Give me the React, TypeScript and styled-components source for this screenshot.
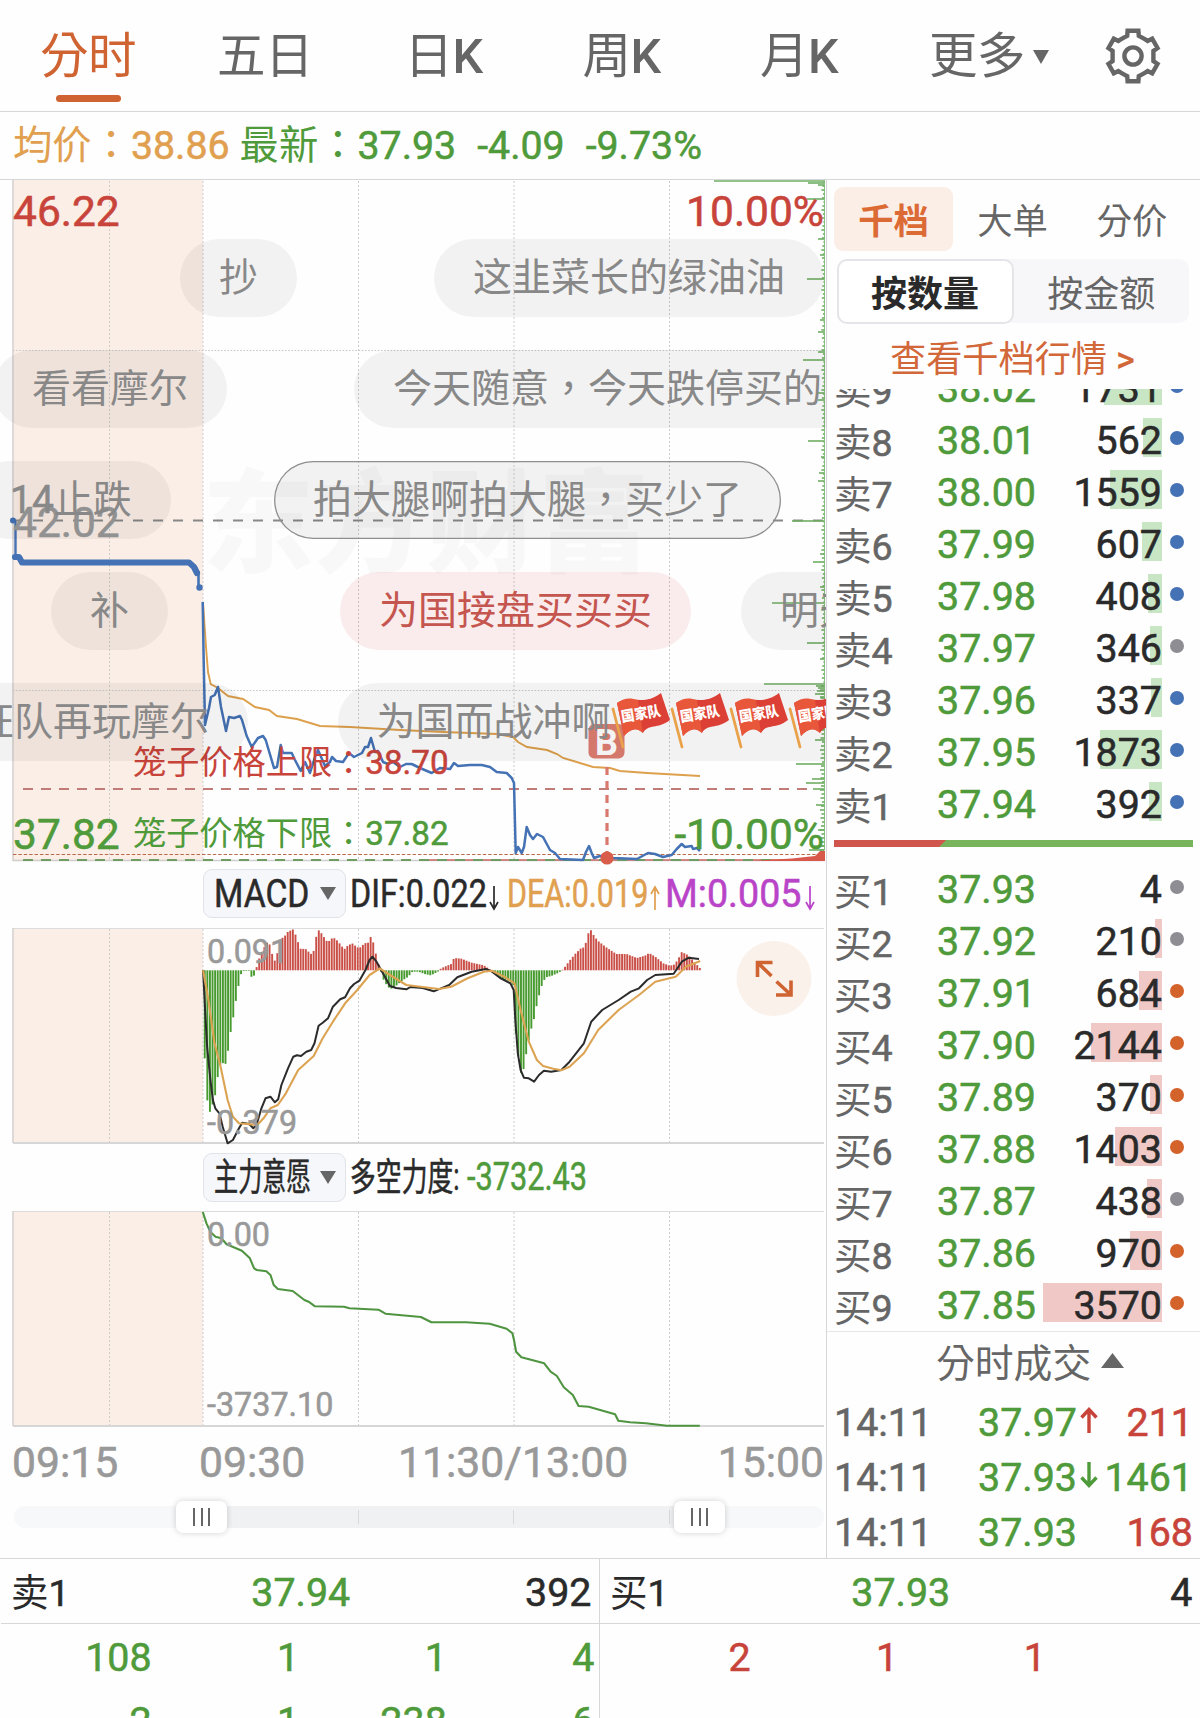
import React from "react";
import styled, { createGlobalStyle, css } from "styled-components";

const C = {
  text: "#2a2a2a",
  mute: "#666666",
  axis: "#999999",
  green: "#4f9a3a",
  red: "#c8443b",
  orange: "#cf6432",
  gold: "#e0a050",
  blue: "#4472b4",
  line: "#d6d7d9",
  blush: "#fbeee6",
};

/* digits and Latin letters sit slightly above the Chinese text in weight */
const figures = css`
  -webkit-text-stroke: 0.55px currentColor;
`;

const Global = createGlobalStyle`
  * { box-sizing: border-box; }
  body { margin: 0; background: #fefefe; }
`;

const Page = styled.div`
  width: 1200px;
  height: 1718px;
  overflow: hidden;
  background: #fefefe;
  color: ${C.text};
  font-family: Roboto, "Noto Sans CJK TC", sans-serif;
  font-size: 39.4px;
  white-space: nowrap;
`;

const Latin = styled.span`
  ${figures}
`;

const Strong = styled.span`
  font-weight: 500;
`;

/* ---------- top bars ---------- */

const TabBar = styled.nav`
  display: grid;
  grid-template-columns: 176px 178px 179px 177px 178px 202px 1fr;
  height: 112px;
  border-bottom: 1px solid ${C.line};
`;

const Tab = styled.div<{ $active?: boolean }>`
  display: flex;
  flex-direction: column;
  align-items: center;
  padding-top: 22px;
  font-size: 48.5px;
  line-height: 70px;
  letter-spacing: -0.5px;
  color: ${(p) => (p.$active ? C.orange : C.mute)};
  &::after {
    content: "";
    width: 65px;
    height: 7px;
    margin-top: 3px;
    border-radius: 4px;
    background: ${(p) => (p.$active ? C.orange : "transparent")};
  }
`;

const TabLabel = styled.span`
  display: flex;
  align-items: center;
  gap: 8px;
`;

const GearCell = styled.div`
  display: flex;
  align-items: center;
  padding-left: 14px;
`;

const InfoBar = styled.div`
  display: flex;
  height: 68px;
  padding-left: 13px;
  border-bottom: 1px solid ${C.line};
  font-size: 39.3px;
  line-height: 68px;
`;

const Info = styled.span<{ $color: string; $gap: number }>`
  color: ${(p) => p.$color};
  margin-right: ${(p) => p.$gap}px;
`;

/* ---------- chart column ---------- */

const Main = styled.main`
  display: flex;
  height: 1378px;
`;

const ChartColumn = styled.section`
  width: 827px;
  flex: none;
  border-right: 1px solid ${C.line};
`;

const PriceArea = styled.div`
  position: relative;
  height: 687px;
  overflow: hidden;
`;

const Drawing = styled.svg`
  display: block;
`;

const Figure = styled.text<{ $color: string; $size: number }>`
  font-size: ${(p) => p.$size}px;
  fill: ${(p) => p.$color};
  stroke: ${(p) => p.$color};
  stroke-width: 0.55px;
`;

const CageLabel = styled.text<{ $color: string }>`
  font-size: 33.2px;
  fill: ${(p) => p.$color};
  tspan {
    stroke: ${(p) => p.$color};
    stroke-width: 0.5px;
  }
`;

const Pill = styled.div<{ $x: number; $row: number; $tone?: "rose" | "mine" }>`
  position: absolute;
  left: ${(p) => p.$x}px;
  top: ${(p) => 59 + p.$row * 111.1}px;
  display: flex;
  align-items: center;
  height: 78px;
  padding: 0 39px;
  border-radius: 39px;
  font-size: 39px;
  line-height: 78px;
  color: ${(p) => (p.$tone === "rose" ? "#c4564f" : "#888888")};
  background: ${(p) => (p.$tone === "rose" ? "rgba(215,60,60,0.09)" : "rgba(0,0,0,0.047)")};
  box-shadow: ${(p) => (p.$tone === "mine" ? "inset 0 0 0 1.3px #8f8f8f" : "none")};
`;

const IndicatorBar = styled.div<{ $h: number }>`
  display: flex;
  align-items: center;
  height: ${(p) => p.$h}px;
  padding-left: 203px;
  font-size: 38px;
  line-height: 48px;
`;

const Select = styled.div`
  display: flex;
  align-items: center;
  width: 143px;
  height: 49px;
  padding-left: 10px;
  margin-right: 4px;
  border: 1px solid #e0e3e8;
  border-radius: 9px;
  background: #f6f7fa;
`;

const Squeeze = styled.span<{ $w: number; $s: number; $color?: string }>`
  flex: none;
  width: ${(p) => p.$w}px;
  transform: scaleX(${(p) => p.$s});
  transform-origin: left center;
  color: ${(p) => p.$color ?? C.text};
  ${figures}
`;

const TimeAxis = styled.div`
  display: grid;
  grid-template-columns: 187px 199px 1fr auto;
  height: 56px;
  padding: 0 2px 0 12px;
  font-size: 42.7px;
  line-height: 56px;
  color: ${C.axis};
  ${figures}
`;

const SliderRow = styled.div`
  display: flex;
  align-items: center;
  height: 54px;
  padding: 0 2px 0 14px;
`;

const Track = styled.div`
  position: relative;
  display: flex;
  flex: 1;
  height: 22px;
  padding: 0 124px 0 189px;
  border-radius: 11px;
  background: #f7f8fa;
`;

const Range = styled.div`
  display: flex;
  flex: 1;
  align-items: center;
  background: #f0f1f3;
`;

const Notch = styled.i<{ $w: number }>`
  width: ${(p) => p.$w}px;
  height: 14px;
  border-right: 1px solid #d9dadc;
`;

const Thumb = styled.div<{ $x: number }>`
  position: absolute;
  left: ${(p) => p.$x}px;
  top: -5px;
  display: flex;
  justify-content: center;
  align-items: center;
  gap: 5.6px;
  width: 51px;
  height: 32px;
  border-radius: 7px;
  background: #fff;
  box-shadow: 0 0 6px rgba(0, 0, 0, 0.18);
  i {
    width: 2px;
    height: 18px;
    background: #666;
  }
`;

/* ---------- order book ---------- */

const Side = styled.aside`
  flex: 1;
  padding-top: 7px;
`;

const ModeTabs = styled.div`
  display: grid;
  grid-template-columns: 119px 119px 120px;
  grid-template-rows: 64px;
  height: 64px;
  margin-left: 7px;
`;

const Mode = styled.div<{ $active?: boolean }>`
  height: 64px;
  border-radius: 9px;
  text-align: center;
  font-size: 35.3px;
  line-height: 70px;
  font-weight: ${(p) => (p.$active ? 700 : 400)};
  color: ${(p) => (p.$active ? "#dc6a35" : C.mute)};
  background: ${(p) => (p.$active ? C.blush : "transparent")};
`;

const Segments = styled.div`
  display: grid;
  grid-template-columns: 177px 1fr;
  grid-template-rows: 64px;
  height: 64px;
  margin: 8px 11px 0 9.5px;
  border-radius: 10px;
  background: #f7f7fa;
`;

const Segment = styled.div<{ $active?: boolean }>`
  height: 65px;
  border-radius: 10px;
  border: 2px solid ${(p) => (p.$active ? "#e4e5e9" : "transparent")};
  background: ${(p) => (p.$active ? "#fff" : "transparent")};
  text-align: center;
  font-size: 36px;
  line-height: 68px;
  font-weight: ${(p) => (p.$active ? 700 : 400)};
  color: ${(p) => (p.$active ? C.text : C.mute)};
`;

const MoreLink = styled.div`
  height: 66px;
  padding-left: 63px;
  font-size: 36.2px;
  line-height: 73px;
  color: #d2683a;
`;

const Asks = styled.div`
  display: flex;
  flex-direction: column;
  justify-content: flex-end;
  height: 445px;
  overflow: hidden;
`;

const Bids = styled.div`
  padding-top: 20px;
  height: 485px;
  border-bottom: 1px solid #e6e7e9;
`;

const Level = styled.div`
  display: grid;
  grid-template-columns: 103px 106px 119px 1fr;
  flex: none;
  height: 52px;
  padding-left: 7px;
  line-height: 45px;
`;

const LevelName = styled.span`
  font-size: 37.6px;
  line-height: 51px;
  color: ${C.mute};
`;

const Price = styled.span`
  color: ${C.green};
  ${figures}
`;

const Qty = styled.span<{ $tone: string }>`
  display: grid;
  justify-items: end;
  height: 39px;
  ${figures}
  & > * {
    grid-area: 1 / 1;
  }
  i {
    height: 39px;
    background: ${(p) => p.$tone};
  }
`;

const Dot = styled.b<{ $color: string }>`
  width: 14px;
  height: 14px;
  margin: 13px 0 0 8px;
  border-radius: 50%;
  background: ${(p) => p.$color};
`;

const Ratio = styled.div`
  height: 7px;
  margin: 6px 7px 0 7px;
  background: linear-gradient(135deg, #d0564d 0 79px, #78b45c 79.5px);
`;

const TradesTitle = styled.div`
  display: flex;
  align-items: center;
  gap: 10px;
  height: 63px;
  padding: 0 0 7px 109px;
  font-size: 38.8px;
  line-height: 56px;
  color: ${C.mute};
  span {
    padding-top: 7px;
  }
`;

const Trade = styled.div`
  display: grid;
  grid-template-columns: 144px 102px 18px 1fr;
  height: 55px;
  padding: 0 7px 0 7px;
  line-height: 56px;
  color: ${C.mute};
  ${figures}
`;

const TradeQty = styled.span<{ $color: string }>`
  justify-self: end;
  color: ${(p) => p.$color};
  ${figures}
`;

/* ---------- bottom queues ---------- */

const Queues = styled.footer`
  display: grid;
  grid-template-columns: 599px 601px;
  height: 160px;
  border-top: 1px solid ${C.line};
`;

const Queue = styled.div<{ $divided?: boolean }>`
  border-left: 1px solid ${(p) => (p.$divided ? C.line : "transparent")};
`;

const QueueHead = styled.div`
  display: grid;
  grid-template-columns: 1fr 100px 1fr;
  height: 65px;
  padding: 0 7.5px 0 10px;
  border-bottom: 1px solid ${C.line};
  line-height: 68px;
`;

const QueueName = styled.span`
  font-size: 37.5px;
`;

const QueueTotal = styled.span`
  justify-self: end;
  ${figures}
`;

const QueueRow = styled.div<{ $color: string }>`
  display: grid;
  grid-template-columns: repeat(4, 147.6px);
  padding-left: 3px;
  height: 64px;
  line-height: 68px;
  text-align: right;
  color: ${(p) => p.$color};
  ${figures}
`;

/* ---------- data ---------- */

type Pt = [number, number];

const priceLine: Pt[] = [
  [202.7, 602], [203.5, 650], [205, 725], [209, 708], [211, 697], [214.7, 695], [218, 687], [221, 707], [226, 731], [229, 717], [234, 718],
  [240, 716], [242, 720], [246.7, 736], [251.7, 747], [258, 738], [263, 736], [265.7, 740], [274, 768], [277, 767],
  [280.7, 745], [283, 753], [291.7, 753], [295, 760], [300.7, 771], [305, 762], [310, 773], [315, 757], [318, 750],
  [325, 766], [330, 762], [332, 757], [336, 761], [343, 762], [349, 753], [354, 757], [362, 753], [365, 747],
  [368, 747], [371, 738], [375, 752], [378, 751], [383, 762], [388, 764], [393, 762], [400, 767], [406, 764], [411.7, 764],
  [420, 768], [431.7, 773], [440, 768], [450, 769], [454, 763], [458, 766], [470, 765], [481.7, 765], [490, 767], [496.7, 772],
  [506.7, 773], [511.7, 778], [514, 783], [515.7, 853], [518, 847], [521.7, 853], [524, 847], [526.7, 827], [530, 835],
  [533, 839], [537, 834], [543, 837], [550, 850], [555, 853], [560, 859], [583, 860], [586, 852], [589, 846],
  [591.7, 853], [594, 858], [600, 856], [613, 858], [637, 859], [648, 853], [655, 854], [663, 857], [671.7, 855],
  [676.7, 849], [681.7, 844], [685, 847], [691.7, 846], [693, 849], [697, 848], [700, 851],
];

const averageLine: Pt[] = [
  [203, 602], [206, 647], [208, 672], [210.7, 684], [218, 688], [228, 696], [243, 699], [255, 707], [269, 710], [277, 716],
  [297, 719], [320, 726], [350, 727], [400, 730], [443, 732], [497, 734], [513, 737], [518, 742], [527, 747], [547, 750],
  [557, 754], [563, 758], [580, 763], [593, 767], [610, 768], [620, 771], [647, 773], [700, 776],
];

/* MACD series are kept in a 2.45 x 3 sample grid */
const grid = (pts: Pt[]): Pt[] => pts.map(([x, y]) => [190 + x / 2.45, 860 + y / 3]);

const difLine = grid([
  [32, 331], [37, 450], [42, 560], [50, 660], [56, 720], [62, 745], [72, 760], [80, 800], [92, 850], [105, 840], [120, 805],
  [128, 788], [145, 792], [155, 805], [163, 795], [175, 745], [185, 715], [197, 710], [208, 727], [216, 718], [224, 675],
  [240, 625], [253, 590], [262, 586], [272, 588], [285, 575], [297, 570], [305, 550], [315, 497], [325, 488], [338, 475],
  [350, 440], [368, 418], [380, 412], [392, 385], [402, 372], [415, 362], [430, 330], [440, 300], [447, 290], [457, 305],
  [475, 345], [490, 378], [505, 384], [530, 388], [540, 381], [570, 384], [597, 394], [615, 385], [635, 375], [655, 352],
  [690, 335], [725, 327], [740, 335], [760, 354], [785, 370], [793, 390], [797, 480], [803, 580], [810, 630], [818, 653],
  [830, 655], [843, 665], [855, 645], [867, 632], [885, 635], [910, 630], [930, 605], [965, 550], [983, 485], [1010, 450],
  [1050, 420], [1080, 395], [1100, 385], [1120, 360], [1140, 345], [1185, 341], [1205, 305], [1222, 293], [1247, 297],
]);

const deaLine = grid([
  [32, 331], [45, 420], [60, 550], [75, 620], [92, 720], [105, 770], [120, 790], [165, 795], [180, 775], [197, 745],
  [215, 735], [235, 700], [265, 630], [303, 588], [325, 535], [350, 485], [380, 430], [410, 390], [440, 345], [465, 325],
  [490, 345], [530, 375], [570, 381], [610, 387], [640, 380], [680, 355], [720, 335], [740, 332], [770, 350], [795, 370],
  [810, 450], [830, 545], [850, 600], [865, 618], [890, 626], [910, 631], [930, 620], [965, 580], [1000, 510],
  [1050, 450], [1100, 405], [1140, 365], [1190, 350], [1215, 320], [1250, 303],
]);

const histogram = grid([
  [37, 595], [43, 730], [50, 760], [56, 730], [63, 700], [70, 632], [76, 608], [89, 612], [95, 558], [101, 505], [108, 460],
  [114, 410], [120, 370], [126, 338], [133, 332], [146, 332], [152, 356], [158, 345], [164, 318], [171, 290],
  [178, 270], [184, 258], [190, 245], [196, 255], [203, 290], [209, 305], [216, 270], [223, 235], [230, 232], [240, 215],
  [253, 208], [260, 228], [270, 266], [288, 268], [292, 280], [300, 283], [305, 266], [310, 225], [317, 208], [323, 222],
  [335, 243], [343, 243], [350, 231], [362, 243], [378, 268], [388, 255], [400, 250], [408, 262], [420, 262], [426, 250],
  [437, 248], [443, 230], [450, 250], [457, 290], [463, 318], [468, 335], [474, 358], [482, 375], [490, 387], [500, 383],
  [510, 372], [520, 362], [535, 350], [545, 335], [560, 335], [575, 342], [590, 346], [600, 340], [610, 333], [615, 325],
  [640, 312], [647, 294], [665, 296], [690, 308], [720, 316], [735, 328], [740, 333], [760, 355], [780, 362], [792, 375],
  [796, 500], [800, 535], [806, 605], [812, 645], [818, 625], [825, 573], [832, 530], [838, 497], [845, 468], [851, 425],
  [858, 395], [864, 368], [872, 352], [885, 348], [900, 340], [910, 333], [918, 322], [930, 302], [945, 280], [957, 266],
  [965, 262], [970, 248], [976, 220], [983, 210], [990, 228], [1000, 243], [1020, 262], [1045, 282], [1070, 282],
  [1095, 294], [1115, 287], [1125, 279], [1140, 290], [1160, 310], [1175, 317], [1185, 315], [1195, 300], [1205, 276],
  [1220, 285], [1235, 305], [1250, 325],
]);

const forceLine: Pt[] = (
  [
    [383, 216], [390, 250], [397, 275], [407, 290], [418, 295], [428, 313], [457, 332], [472, 355], [480, 385], [485, 390],
    [503, 394], [511, 405], [517, 435], [525, 447], [553, 453], [575, 480], [583, 485], [595, 499], [650, 500], [660, 505],
    [715, 509], [728, 521], [795, 531], [815, 547], [880, 547], [925, 551], [957, 566], [968, 580], [971, 600], [975, 635], [985, 652],
    [1028, 670], [1040, 695], [1052, 708], [1065, 742], [1082, 765], [1093, 798], [1112, 800], [1162, 823], [1168, 842],
    [1190, 847], [1220, 850], [1260, 857], [1322, 857],
  ] as Pt[]
).map(([x, y]) => [x / 1.889, 1140 + y / 3]);

const volumeTicks: Pt[] = [
  [183, 16], [185, 6], [199, 17], [239, 6], [255, 4], [279, 17], [320, 4], [332, 6], [352, 6], [360, 21], [393, 6], [400, 6],
  [441, 16], [457, 3], [473, 5], [481, 6], [521, 32], [554, 4], [562, 11], [587, 4], [603, 52], [643, 17], [659, 4],
  [684, 60], [686, 8], [688, 6], [691, 7], [694, 9], [697, 4], [713, 3], [721, 4], [729, 3], [740, 9], [764, 28], [779, 12],
  [783, 18], [789, 11], [805, 8], [830, 6], [846, 10], [850, 15],
];

const poly = (pts: Pt[]) => pts.map(([x, y]) => `${x.toFixed(1)},${y.toFixed(1)}`).join(" ");

const sample = (pts: Pt[], x: number) => {
  const i = pts.findIndex((p) => p[0] >= x);
  if (i <= 0) return pts[i === 0 ? 0 : pts.length - 1][1];
  const [x0, y0] = pts[i - 1];
  const [x1, y1] = pts[i];
  return y0 + ((y1 - y0) * (x - x0)) / (x1 - x0);
};

type LevelRow = [string, number, string, number, string];

const asks: LevelRow[] = [
  ["卖", 9, "38.02", 1731, C.blue],
  ["卖", 8, "38.01", 562, C.blue],
  ["卖", 7, "38.00", 1559, C.blue],
  ["卖", 6, "37.99", 607, C.blue],
  ["卖", 5, "37.98", 408, C.blue],
  ["卖", 4, "37.97", 346, "#8f8d94"],
  ["卖", 3, "37.96", 337, C.blue],
  ["卖", 2, "37.95", 1873, C.blue],
  ["卖", 1, "37.94", 392, C.blue],
];

const bids: LevelRow[] = [
  ["买", 1, "37.93", 4, "#8f8d94"],
  ["买", 2, "37.92", 210, "#8f8d94"],
  ["买", 3, "37.91", 684, "#d4622b"],
  ["买", 4, "37.90", 2144, "#d4622b"],
  ["买", 5, "37.89", 370, "#d4622b"],
  ["买", 6, "37.88", 1403, "#d4622b"],
  ["买", 7, "37.87", 438, "#8f8d94"],
  ["买", 8, "37.86", 970, "#d4622b"],
  ["买", 9, "37.85", 3570, "#d4622b"],
];

/* ---------- drawings ---------- */

const Gear = () => {
  const pts: string[] = [];
  for (let k = 0; k < 6; k++) {
    const spokes: Pt[] = [[-25, 20.5], [-16, 21], [-12, 25.8], [12, 25.8], [16, 21], [25, 20.5]];
    for (const [d, r] of spokes) {
      const a = ((k * 60 + d - 90) * Math.PI) / 180;
      pts.push(`${(29 + r * Math.cos(a)).toFixed(1)},${(29 + r * Math.sin(a)).toFixed(1)}`);
    }
  }
  return (
    <Drawing width="58" height="58" viewBox="0 0 58 58" fill="none" stroke={C.mute} strokeWidth="4.4">
      <polygon points={pts.join(" ")} />
      <circle cx="29" cy="29" r="8.6" />
    </Drawing>
  );
};

const Caret = ({ w, h, up }: { w: number; h: number; up?: boolean }) => (
  <Drawing width={w} height={h} viewBox="0 0 10 10" preserveAspectRatio="none">
    <path d={up ? "M0 10L5 0L10 10Z" : "M0 0H10L5 10Z"} fill={C.mute} />
  </Drawing>
);

const ThinArrow = ({ color, up, gap }: { color: string; up?: boolean; gap: number }) => (
  <Drawing width={10 + gap} height="34" viewBox={`0 -9 ${10 + gap} 34`} fill="none" stroke={color} strokeWidth="1.7">
    <path d={up ? "M5 24V1M1 8L5 1L9 8" : "M5 0V23M1 16L5 23L9 16"} />
  </Drawing>
);

const ArrowSlot = styled.span`
  padding-top: 12px;
  line-height: 0;
`;

const TradeArrow = ({ up }: { up?: boolean }) => (
  <ArrowSlot>
    <Drawing width="18" height="26" viewBox="0 0 18 26" fill="none" stroke={up ? C.red : C.green} strokeWidth="3.4">
      <path d={up ? "M9 26V3M1.5 10.5L9 2.5L16.5 10.5" : "M9 0V23M1.5 15.5L9 23.5L16.5 15.5"} />
    </Drawing>
  </ArrowSlot>
);

const FlagArt = styled.svg`
  flex: none;
  margin-top: -1px;
`;

const Flag = () => (
  <FlagArt width="59" height="60" viewBox="0 0 59 60">
    <path d="M2 17L12 55" stroke="#e9a24a" strokeWidth="2.8" strokeLinecap="round" />
    <path d="M6 11C20 2 32 15 50 1L59 28C46 38 38 31 32 41C26 35 20 36 13 44Z" fill="#dc3f35" />
    <path d="M6 11C14 5 20 6 27 8L32 41C26 35 20 36 13 44Z" fill="#e8573a" />
    <text x="30" y="27" fontSize="14.5" fontWeight="900" fill="#fff" textAnchor="middle" transform="rotate(-9 29 22)" textLength="40" lengthAdjust="spacingAndGlyphs">
      国家队
    </text>
  </FlagArt>
);

const columns = [109.5, 203, 358.5, 514, 669.5];

const Columns = ({ y1, y2 }: { y1: number; y2: number }) => (
  <g stroke="#cccccc" strokeWidth="1" strokeDasharray="2 2">
    {columns.map((x) => (
      <line key={x} x1={x} x2={x} y1={y1} y2={y2} />
    ))}
  </g>
);

const PriceChart = () => (
  <Drawing width="826" height="687" viewBox="0 180 826 687">
    <rect x="12.5" y="180" width="190.5" height="680" fill={C.blush} />
    <text x="202" y="564" fontSize="112" fontWeight="900" fill="#000" fillOpacity="0.024">
      东方财富
    </text>
    <Columns y1={181} y2={860} />
    <g stroke="#c9c9c9" strokeDasharray="1.6 1.6">
      <line x1="13" x2="824" y1="350.5" y2="350.5" />
      <line x1="13" x2="824" y1="690.5" y2="690.5" />
    </g>
    <line x1="13" x2="13" y1="180" y2="861" stroke="#d4d2d1" strokeWidth="1.5" />
    <line x1="13" x2="824" y1="860.5" y2="860.5" stroke="#cfcfcf" strokeWidth="1.5" />
    <line x1="13" x2="824" y1="520.5" y2="520.5" stroke="#888" strokeWidth="1.8" strokeDasharray="10 10" />
    <line x1="23" x2="808" y1="789" y2="789" stroke="#c17c78" strokeWidth="1.8" strokeDasharray="10 8" />
    <line x1="13" x2="824" y1="854.5" y2="854.5" stroke="#b9694a" strokeWidth="1.2" strokeDasharray="3.4 2" />
    <line x1="420" x2="824" y1="860" y2="860" stroke="#c96a66" strokeWidth="1.4" />
    <line x1="23" x2="808" y1="860" y2="860" stroke="#6f9c62" strokeWidth="1.8" strokeDasharray="10 8" />

    <g stroke="#6fae63" strokeWidth="1.6">
      <line x1="714" x2="824" y1="181" y2="181" />
      {volumeTicks.map(([y, len]) => (
        <line key={y} x1={824 - len} x2="824" y1={y} y2={y} />
      ))}
      {Array.from({ length: 168 }, (_, i) => (
        <line key={i} x1={824 - ((i * 7) % 5) * 0.5 - (i > 125 ? 2 : 0.6)} x2="824.5" y1={182 + i * 4} y2={182 + i * 4} />
      ))}
      <line x1="824.5" x2="824.5" y1="180" y2="850" strokeWidth="0.8" />
    </g>
    <path d="M750 861L792 858.5L815 856L820 851H825V861Z" fill="#d9584c" />

    <polyline points={poly(averageLine)} fill="none" stroke="#dda04c" strokeWidth="1.9" />
    <polyline points={poly(priceLine)} fill="none" stroke={C.blue} strokeWidth="2.5" strokeLinejoin="round" />
    <g fill="none" stroke={C.blue}>
      <path d="M13 520L15.5 522V557" strokeWidth="2.4" />
      <path d="M15 557L19 557L22 562.5H189L194 567L197 573" strokeWidth="6.2" strokeLinejoin="round" strokeLinecap="round" />
      <path d="M198.5 571V587" strokeWidth="2.6" />
    </g>
    <circle cx="13" cy="520.5" r="3" fill={C.blue} />
    <circle cx="199.5" cy="587.5" r="3.2" fill={C.blue} />

    <Figure x="13" y="226" $size={42.5} $color={C.red}>46.22</Figure>
    <Figure x="824" y="226" $size={42.5} $color={C.red} textAnchor="end">10.00%</Figure>
    <Figure x="13" y="537" $size={42.5} $color={C.axis}>42.02</Figure>
    <Figure x="13" y="849" $size={42.5} $color={C.green}>37.82</Figure>
    <Figure x="824" y="849" $size={42.5} $color={C.green} textAnchor="end">-10.00%</Figure>
    <CageLabel x="133" y="774" $color={C.red}>笼子价格上限：<tspan>38.70</tspan></CageLabel>
    <CageLabel x="133" y="845" $color={C.green}>笼子价格下限：<tspan>37.82</tspan></CageLabel>

    <line x1="607" x2="607" y1="767" y2="852" stroke="#d9786c" strokeWidth="3.2" strokeDasharray="8 6" />
    <circle cx="607" cy="858" r="6.6" fill="#d85d4a" />
    <rect x="588.5" y="724" width="36" height="34.5" rx="6" fill="#df7e71" />
    <text x="606.5" y="755" fontSize="36" fontWeight="700" fill="#fff" textAnchor="middle">B</text>
  </Drawing>
);

const MacdChart = () => (
  <Drawing width="826" height="230" viewBox="0 920 826 230">
    <rect x="12.5" y="928" width="190.5" height="215" fill={C.blush} />
    <Columns y1={929} y2={1142} />
    <line x1="13" x2="824" y1="928.5" y2="928.5" stroke="#dcdcdc" />
    <line x1="13" x2="824" y1="1143" y2="1143" stroke="#d6d6d6" strokeWidth="1.8" />
    <line x1="13" x2="13" y1="928" y2="1143" stroke="#d4d2d1" strokeWidth="1.5" />
    {Array.from({ length: 192 }, (_, i) => {
      const x = 204.8 + i * 2.592;
      const y = sample(histogram, x);
      const up = y < 970.3;
      return (
        <rect
          key={i}
          x={x - 1}
          y={up ? y : 970.3}
          width="1.9"
          height={Math.max(Math.abs(y - 970.3), 0.6)}
          fill={up ? "#c94f47" : "#469a2e"}
        />
      );
    })}
    <polyline points={poly(difLine)} fill="none" stroke="#2b2b2b" strokeWidth="2" strokeLinejoin="round" />
    <polyline points={poly(deaLine)} fill="none" stroke="#dca352" strokeWidth="2.1" strokeLinejoin="round" />
    <Figure x="207" y="962.5" $size={32.3} $color={C.axis}>0.091</Figure>
    <Figure x="207" y="1133.5" $size={32.3} $color={C.axis}>-0.379</Figure>
    <circle cx="774" cy="978.5" r="37.5" fill="#faf1eb" />
    <g fill="none" stroke={C.orange} strokeWidth="3.6">
      <path d="M757.5 977V962.5H772.5M758 963L771.5 976" />
      <path d="M776 995H791V980.5M790.5 994.5L776.5 981.5" />
    </g>
  </Drawing>
);

const ForceChart = () => (
  <Drawing width="826" height="230" viewBox="0 1204 826 230">
    <rect x="12.5" y="1211" width="190.5" height="215" fill={C.blush} />
    <Columns y1={1212} y2={1426} />
    <line x1="13" x2="824" y1="1211.5" y2="1211.5" stroke="#dcdcdc" />
    <line x1="13" x2="824" y1="1426" y2="1426" stroke="#d6d6d6" strokeWidth="1.8" />
    <line x1="13" x2="13" y1="1211" y2="1426" stroke="#d4d2d1" strokeWidth="1.5" />
    <polyline points={poly(forceLine)} fill="none" stroke="#4f9440" strokeWidth="2.1" strokeLinejoin="round" />
    <Figure x="207" y="1245.5" $size={32.3} $color={C.axis}>0.00</Figure>
    <Figure x="207" y="1416" $size={32.3} $color={C.axis}>-3737.10</Figure>
  </Drawing>
);

const BookRow = ({ row, tone }: { row: LevelRow; tone: string }) => (
  <Level>
    <LevelName>{row[0]}<Latin>{row[1]}</Latin></LevelName>
    <Price>{row[2]}</Price>
    <Qty $tone={tone}>
      <i style={{ width: row[3] < 30 ? 0 : row[3] / 30 }} />
      <span>{row[3]}</span>
    </Qty>
    <Dot $color={row[4]} />
  </Level>
);

export default function App() {
  return (
    <Page>
      <Global />
      <TabBar>
        <Tab $active>分时</Tab>
        <Tab>五日</Tab>
        <Tab><TabLabel><span>日<Strong>K</Strong></span></TabLabel></Tab>
        <Tab><TabLabel><span>周<Strong>K</Strong></span></TabLabel></Tab>
        <Tab><TabLabel><span>月<Strong>K</Strong></span></TabLabel></Tab>
        <Tab>
          <TabLabel>更多<Caret w={16} h={14} /></TabLabel>
        </Tab>
        <GearCell><Gear /></GearCell>
      </TabBar>
      <InfoBar>
        <Info $color={C.gold} $gap={10}>均价：<Latin>38.86</Latin></Info>
        <Info $color={C.green} $gap={21}>最新：<Latin>37.93</Latin></Info>
        <Info $color={C.green} $gap={21}><Latin>-4.09</Latin></Info>
        <Info $color={C.green} $gap={0}><Latin>-9.73%</Latin></Info>
      </InfoBar>

      <Main>
        <ChartColumn>
          <PriceArea>
            <PriceChart />
            <Pill $x={180} $row={0}>抄</Pill>
            <Pill $x={434} $row={0}>这韭菜长的绿油油</Pill>
            <Pill $x={-7} $row={1}>看看摩尔</Pill>
            <Pill $x={354} $row={1}>今天随意，今天跌停买的</Pill>
            <Pill $x={-29} $row={2}><span><Latin>14</Latin>止跌</span></Pill>
            <Pill $x={274} $row={2} $tone="mine">拍大腿啊拍大腿，买少了</Pill>
            <Pill $x={51} $row={3}>补</Pill>
            <Pill $x={340} $row={3} $tone="rose">为国接盘买买买</Pill>
            <Pill $x={741} $row={3}>明天</Pill>
            <Pill $x={-64} $row={4}>狂队再玩摩尔</Pill>
            <Pill $x={337.5} $row={4}>
              为国而战冲啊
              <Flag />
              <Flag />
              <Flag />
              <Flag />
            </Pill>
          </PriceArea>
          <IndicatorBar $h={53}>
            <Select>
              <Squeeze $w={106} $s={0.885}>MACD</Squeeze>
              <Caret w={16} h={13} />
            </Select>
            <Squeeze $w={139} $s={0.85}>DIF:0.022</Squeeze>
            <ThinArrow color={C.text} gap={8} />
            <Squeeze $w={143} $s={0.803} $color={C.gold}>DEA:0.019</Squeeze>
            <ThinArrow color={C.gold} up gap={5} />
            <Squeeze $w={140} $s={0.99} $color="#b944c8">M:0.005</Squeeze>
            <ThinArrow color="#b944c8" gap={0} />
          </IndicatorBar>
          <MacdChart />
          <IndicatorBar $h={54}>
            <Select>
              <Squeeze $w={106} $s={0.635}>主力意愿</Squeeze>
              <Caret w={16} h={13} />
            </Select>
            <Squeeze $w={116.5} $s={0.68}>多空力度:</Squeeze>
            <Squeeze $w={120} $s={0.808} $color={C.green}>-3732.43</Squeeze>
          </IndicatorBar>
          <ForceChart />
          <TimeAxis>
            <span>09:15</span>
            <span>09:30</span>
            <span>11:30/13:00</span>
            <span>15:00</span>
          </TimeAxis>
          <SliderRow>
            <Track>
              <Range>
                <Notch $w={156} />
                <Notch $w={155} />
                <Notch $w={156} />
              </Range>
              <Thumb $x={162}><i /><i /><i /></Thumb>
              <Thumb $x={660}><i /><i /><i /></Thumb>
            </Track>
          </SliderRow>
        </ChartColumn>

        <Side>
          <ModeTabs>
            <Mode $active>千档</Mode>
            <Mode>大单</Mode>
            <Mode>分价</Mode>
          </ModeTabs>
          <Segments>
            <Segment $active>按数量</Segment>
            <Segment>按金额</Segment>
          </Segments>
          <MoreLink>查看千档行情 <Strong>&gt;</Strong></MoreLink>
          <Asks>
            {asks.map((r) => (
              <BookRow key={r[1]} row={r} tone="#c8e6c4" />
            ))}
          </Asks>
          <Ratio />
          <Bids>
            {bids.map((r) => (
              <BookRow key={r[1]} row={r} tone="#f0c9c7" />
            ))}
          </Bids>
          <TradesTitle>
            <span>分时成交</span>
            <Caret w={23} h={15} up />
          </TradesTitle>
          <Trade>
            <span>14:11</span>
            <Price>37.97</Price>
            <TradeArrow up />
            <TradeQty $color={C.red}>211</TradeQty>
          </Trade>
          <Trade>
            <span>14:11</span>
            <Price>37.93</Price>
            <TradeArrow />
            <TradeQty $color={C.green}>1461</TradeQty>
          </Trade>
          <Trade>
            <span>14:11</span>
            <Price>37.93</Price>
            <span />
            <TradeQty $color={C.red}>168</TradeQty>
          </Trade>
        </Side>
      </Main>

      <Queues>
        <Queue>
          <QueueHead>
            <QueueName>卖<Latin>1</Latin></QueueName>
            <Price>37.94</Price>
            <QueueTotal>392</QueueTotal>
          </QueueHead>
          <QueueRow $color={C.green}>
            <span>108</span>
            <span>1</span>
            <span>1</span>
            <span>4</span>
          </QueueRow>
          <QueueRow $color={C.green}>
            <span>2</span>
            <span>1</span>
            <span>238</span>
            <span>6</span>
          </QueueRow>
        </Queue>
        <Queue $divided>
          <QueueHead>
            <QueueName>买<Latin>1</Latin></QueueName>
            <Price>37.93</Price>
            <QueueTotal>4</QueueTotal>
          </QueueHead>
          <QueueRow $color={C.red}>
            <span>2</span>
            <span>1</span>
            <span>1</span>
          </QueueRow>
        </Queue>
      </Queues>
    </Page>
  );
}
